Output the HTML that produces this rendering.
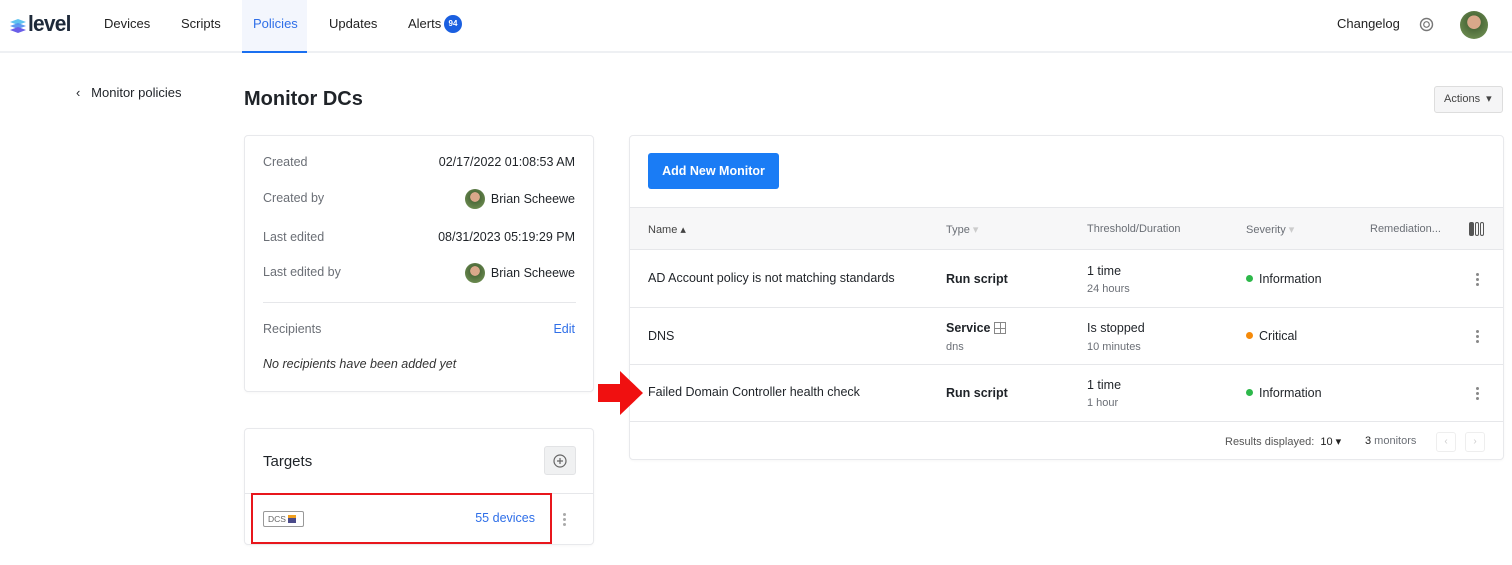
<!DOCTYPE html>
<html><head><style>
*{box-sizing:border-box;margin:0;padding:0}
body{width:1512px;height:565px;overflow:hidden;background:#fff;font-family:"Liberation Sans",sans-serif;color:#1f2328;font-size:12.5px;position:relative}
.a{position:absolute}
.hdr{position:absolute;left:0;top:0;width:1512px;height:53px;border-bottom:2px solid #eef0f3}
.nav{position:absolute;top:16px;font-size:13px;color:#222}
.card{position:absolute;background:#fff;border:1px solid #e8e9ec;border-radius:4px;box-shadow:0 1px 2px rgba(0,0,0,.03)}
.lbl{color:#6b6f76;font-size:12.5px}
.row{position:absolute;left:0;width:873px;border-top:1px solid #e6e7ea}
.sm{font-size:11px;color:#6b6f76}
.dot{display:inline-block;width:7px;height:7px;border-radius:50%;margin-right:6px;vertical-align:1px}
.kebab{position:absolute;left:846px;width:3px}
.kebab i{display:block;width:3px;height:3px;background:#888;border-radius:50%;margin-bottom:2px}
</style></head><body>
<div class="hdr">
 <svg class="a" style="left:9px;top:18px" width="18" height="16" viewBox="0 0 18 16"><path d="M1 4L9 1L17 4L9 7Z" fill="#5fc3f0"/><path d="M1 8L9 5L17 8L9 11Z" fill="#4f8ef0" opacity=".9"/><path d="M1 12L9 9L17 12L9 15Z" fill="#6a5ee8"/></svg>
 <div class="a" style="left:28px;top:11px;font-size:22px;font-weight:bold;color:#1e2a3a;letter-spacing:-0.8px;transform:scaleX(0.95);transform-origin:left">level</div>
 <div class="nav" style="left:104px">Devices</div>
 <div class="nav" style="left:181px">Scripts</div>
 <div class="a" style="left:242px;top:0;width:65px;height:53px;background:#f3f6fd;border-bottom:2px solid #1a6ff0"></div>
 <div class="nav" style="left:253px;color:#2f6fe8">Policies</div>
 <div class="nav" style="left:329px">Updates</div>
 <div class="nav" style="left:408px">Alerts</div>
 <div class="a" style="left:444px;top:15px;width:18px;height:18px;border-radius:50%;background:#1a5fe0;color:#fff;font-size:8px;font-weight:bold;text-align:center;line-height:18px">94</div>
 <div class="nav" style="left:1337px">Changelog</div>
 <svg class="a" style="left:1419px;top:17px" width="15" height="15" viewBox="0 0 15 15"><circle cx="7.5" cy="7.5" r="6" fill="none" stroke="#777" stroke-width="1.4"/><circle cx="7.5" cy="7.5" r="2.8" fill="none" stroke="#777" stroke-width="1.2"/></svg>
 <div class="a" style="left:1460px;top:11px;width:28px;height:28px;border-radius:50%;background:radial-gradient(circle at 50% 40%,#d9a88a 0 30%,#4d6b3a 32%,#7a9a5a 100%)"></div>
</div>
<div class="a" style="left:76px;top:85px;font-size:13px">‹ &nbsp;&nbsp;Monitor policies</div>
<div class="a" style="left:244px;top:88px;font-size:20px;font-weight:bold">Monitor DCs</div>
<div class="a" style="left:1434px;top:86px;width:69px;height:27px;border:1px solid #ddd;border-radius:3px;background:#f5f5f6;font-size:11px;color:#444;line-height:25px;padding-left:9px">Actions &nbsp;▾</div>

<div class="card" style="left:244px;top:135px;width:350px;height:257px">
 <div class="a lbl" style="left:18px;top:19px">Created</div><div class="a" style="right:18px;top:19px">02/17/2022 01:08:53 AM</div>
 <div class="a lbl" style="left:18px;top:55px">Created by</div>
 <div class="a" style="left:220px;top:53px;width:20px;height:20px;border-radius:50%;background:radial-gradient(circle at 50% 40%,#d9a88a 0 30%,#4d6b3a 32%,#7a9a5a 100%)"></div>
 <div class="a" style="right:18px;top:56px">Brian Scheewe</div>
 <div class="a lbl" style="left:18px;top:94px">Last edited</div><div class="a" style="right:18px;top:94px">08/31/2023 05:19:29 PM</div>
 <div class="a lbl" style="left:18px;top:129px">Last edited by</div>
 <div class="a" style="left:220px;top:127px;width:20px;height:20px;border-radius:50%;background:radial-gradient(circle at 50% 40%,#d9a88a 0 30%,#4d6b3a 32%,#7a9a5a 100%)"></div>
 <div class="a" style="right:18px;top:130px">Brian Scheewe</div>
 <div class="a" style="left:18px;top:166px;width:313px;border-top:1px solid #e6e7ea"></div>
 <div class="a lbl" style="left:18px;top:186px">Recipients</div><div class="a" style="right:18px;top:186px;color:#2f6fe8">Edit</div>
 <div class="a" style="left:18px;top:221px;font-style:italic;color:#333">No recipients have been added yet</div>
</div>

<div class="card" style="left:244px;top:428px;width:350px;height:117px">
 <div class="a" style="left:18px;top:24px;font-size:15px">Targets</div>
 <div class="a" style="left:299px;top:17px;width:32px;height:29px;background:#f0f1f2;border:1px solid #e2e3e5;border-radius:3px"><svg style="margin:7px 0 0 8px" width="14" height="14" viewBox="0 0 14 14"><circle cx="7" cy="7" r="6" fill="none" stroke="#666" stroke-width="1.2"/><path d="M7 4v6M4 7h6" stroke="#666" stroke-width="1.2"/></svg></div>
 <div class="a" style="left:0;top:64px;width:348px;border-top:1px solid #e6e7ea"></div>
 <div class="a" style="left:6px;top:64px;width:301px;height:51px;border:2px solid #e8161c"></div>
 <div class="a" style="left:18px;top:82px;width:41px;height:16px;border:1px solid #999;border-radius:2px;font-size:8.5px;color:#666;line-height:14px;padding-left:4px">DCS <span style="display:inline-block;width:8px;height:8px;background:#4a4a8a;border-top:3px solid #f0a020;vertical-align:-1px"></span></div>
 <div class="a" style="right:58px;top:82px;color:#2f6fe8">55 devices</div>
 <div class="a" style="left:318px;top:84px;width:3px"><i style="display:block;width:3px;height:3px;background:#aaa;border-radius:50%;margin-bottom:2px"></i><i style="display:block;width:3px;height:3px;background:#aaa;border-radius:50%;margin-bottom:2px"></i><i style="display:block;width:3px;height:3px;background:#aaa;border-radius:50%"></i></div>
</div>

<div class="card" style="left:629px;top:135px;width:875px;height:325px">
 <div class="a" style="left:18px;top:17px;width:131px;height:36px;background:#1a7cf5;border-radius:3px;color:#fff;font-weight:bold;font-size:12.5px;text-align:center;line-height:36px">Add New Monitor</div>
 <div class="row" style="top:71px;height:43px;background:#f7f7f8;border-bottom:1px solid #e6e7ea">
  <div class="a sm" style="left:18px;top:15px;color:#444">Name ▴</div>
  <div class="a sm" style="left:316px;top:15px">Type <span style="color:#ccc">▾</span></div>
  <div class="a sm" style="left:457px;top:15px">Threshold/Duration</div>
  <div class="a sm" style="left:616px;top:15px">Severity <span style="color:#ccc">▾</span></div>
  <div class="a sm" style="left:740px;top:15px">Remediation...</div>
  <div class="a" style="left:839px;top:14px;width:16px;height:14px;display:flex;gap:1px"><b style="width:5px;background:#555;border-radius:2px"></b><b style="width:4px;border:1.5px solid #555;border-radius:2px"></b><b style="width:4px;border:1.5px solid #555;border-radius:2px"></b></div>
 </div>
 <div class="row" style="top:114px;height:57px;border-top:none">
  <div class="a" style="left:18px;top:21px">AD Account policy is not matching standards</div>
  <div class="a" style="left:316px;top:22px;font-weight:bold">Run script</div>
  <div class="a" style="left:457px;top:14px">1 time</div><div class="a sm" style="left:457px;top:33px">24 hours</div>
  <div class="a" style="left:616px;top:22px"><span class="dot" style="background:#2db84a"></span>Information</div>
  <div class="kebab" style="top:23px"><i></i><i></i><i></i></div>
 </div>
 <div class="row" style="top:171px;height:57px">
  <div class="a" style="left:18px;top:21px">DNS</div>
  <div class="a" style="left:316px;top:13px;font-weight:bold">Service <span style="display:inline-block;width:12px;height:12px;border:1px solid #888;vertical-align:-2px;background:linear-gradient(#888,#888) 5px 0/1px 12px no-repeat,linear-gradient(#888,#888) 0 5px/12px 1px no-repeat"></span></div>
  <div class="a sm" style="left:316px;top:33px">dns</div>
  <div class="a" style="left:457px;top:13px">Is stopped</div><div class="a sm" style="left:457px;top:33px">10 minutes</div>
  <div class="a" style="left:616px;top:21px"><span class="dot" style="background:#f58a0a"></span>Critical</div>
  <div class="kebab" style="top:22px"><i></i><i></i><i></i></div>
 </div>
 <div class="row" style="top:228px;height:57px">
  <div class="a" style="left:18px;top:20px">Failed Domain Controller health check</div>
  <div class="a" style="left:316px;top:21px;font-weight:bold">Run script</div>
  <div class="a" style="left:457px;top:13px">1 time</div><div class="a sm" style="left:457px;top:32px">1 hour</div>
  <div class="a" style="left:616px;top:21px"><span class="dot" style="background:#2db84a"></span>Information</div>
  <div class="kebab" style="top:22px"><i></i><i></i><i></i></div>
 </div>
 <div class="row" style="top:285px;height:39px">
  <div class="a sm" style="left:595px;top:13px;color:#555">Results displayed: &nbsp;<span style="color:#222">10 ▾</span></div>
  <div class="a sm" style="left:735px;top:13px"><span style="color:#222">3</span> monitors</div>
  <div class="a" style="left:806px;top:10px;width:20px;height:20px;border:1px solid #eee;border-radius:3px;font-size:10px;color:#ccc;text-align:center;line-height:18px">‹</div>
  <div class="a" style="left:835px;top:10px;width:20px;height:20px;border:1px solid #eee;border-radius:3px;font-size:10px;color:#ccc;text-align:center;line-height:18px">›</div>
 </div>
</div>

<svg class="a" style="left:598px;top:370px;z-index:5" width="46" height="46" viewBox="0 0 46 46"><path d="M0 14H22V1L45 23L22 45V32H0Z" fill="#f01010"/></svg>
</body></html>
